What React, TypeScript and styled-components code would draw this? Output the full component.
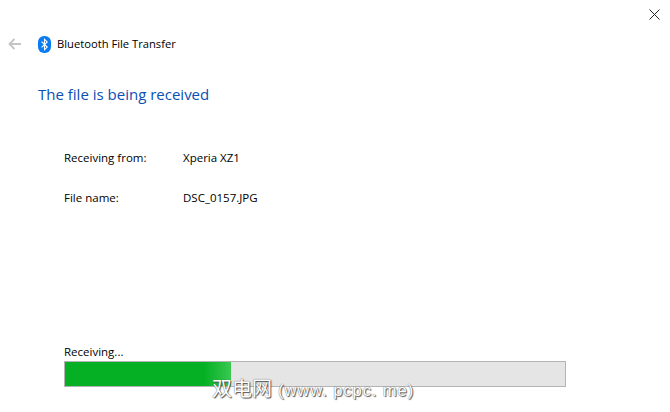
import React from "react";
import styled, { createGlobalStyle } from "styled-components";

const GlobalStyle = createGlobalStyle`
  html, body {
    margin: 0;
    padding: 0;
    background: #fff;
  }
`;

const Window = styled.div`
  position: relative;
  width: 670px;
  height: 412px;
  box-sizing: border-box;
  overflow: hidden;
  background: #fff;
  color: #000;
  font-family: "Open Sans", "Noto Sans", sans-serif;
  font-size: 11.5px;
  display: flex;
  flex-direction: column;
`;

const CloseRow = styled.div`
  height: 28px;
  display: flex;
  justify-content: flex-end;
  align-items: center;
  padding-right: 10px;
`;

const TitleBar = styled.div`
  height: 32px;
  display: flex;
  align-items: center;
  padding-left: 8px;
`;

const BackArrow = styled.svg`
  width: 13px;
  height: 12px;
  margin-right: 17px;
`;

const BluetoothBadge = styled.svg`
  width: 13px;
  height: 17px;
  margin-right: 6px;
`;

const AppName = styled.span`
  font-size: 11.2px;
  margin-bottom: 2px;
`;

const Heading = styled.h1`
  margin: 23px 0 0 38px;
  font-size: 15px;
  line-height: 22px;
  font-weight: 400;
  color: #0a4fb5;
`;

const Details = styled.div`
  margin: 45px 0 0 64px;
  display: flex;
  flex-direction: column;
  row-gap: 24px;
`;

const DetailRow = styled.div`
  display: grid;
  grid-template-columns: 119px 1fr;
  line-height: 16px;
`;

const Footer = styled.div`
  margin: auto 104px 25px 64px;
  display: flex;
  flex-direction: column;
  row-gap: 1px;
`;

const StatusText = styled.div`
  line-height: 16px;
`;

const ProgressTrack = styled.div`
  height: 26px;
  box-sizing: border-box;
  border: 1px solid #b4b4b4;
  background: #e5e5e5;
`;

const ProgressFill = styled.div`
  height: 100%;
  background: linear-gradient(90deg, #06b025 0%, #06b025 84%, #2cc246 96%, #3ac953 100%);
`;

const Watermark = styled.div`
  position: absolute;
  left: 212px;
  top: 375px;
  color: #fff;
  font-family: "Noto Sans CJK SC", "Liberation Sans", sans-serif;
  font-size: 20px;
  line-height: 26px;
  white-space: nowrap;
  text-shadow: 0 0 1px #444, 1px 1px 1px #555;
`;

const WatermarkLatin = styled.span`
  margin-left: 6px;
  font-family: "Liberation Sans", sans-serif;
  font-size: 16.6px;
  letter-spacing: 0.9px;
`;

const App: React.FC = () => {
  const progress = 33.1;

  return (
    <Window>
      <GlobalStyle />
      <CloseRow>
        <svg width="11" height="11" viewBox="0 0 11 11" fill="none" stroke="#222" strokeWidth="1">
          <path d="M.5.5l10 10M10.5.5l-10 10" />
        </svg>
      </CloseRow>
      <TitleBar>
        <BackArrow viewBox="0 0 13 12" fill="none" stroke="#c4c4c4" strokeWidth="1.8">
          <path d="M13 6H1.5M6.5 1 1.5 6l5 5" />
        </BackArrow>
        <BluetoothBadge viewBox="0 0 13 17">
          <rect x="0" y="0" width="13" height="17" rx="6" fill="#0a7cf2" />
          <path d="M3.6 5.6l5.6 5.5-2.7 2.6V3.3l2.7 2.6-5.6 5.5" fill="none" stroke="#fff" strokeWidth="1.1" />
        </BluetoothBadge>
        <AppName>Bluetooth File Transfer</AppName>
      </TitleBar>
      <Heading>The file is being received</Heading>
      <Details>
        <DetailRow>
          <span>Receiving from:</span>
          <span>Xperia XZ1</span>
        </DetailRow>
        <DetailRow>
          <span>File name:</span>
          <span>DSC_0157.JPG</span>
        </DetailRow>
      </Details>
      <Footer>
        <StatusText>Receiving...</StatusText>
        <ProgressTrack>
          <ProgressFill style={{ width: `${progress}%` }} />
        </ProgressTrack>
      </Footer>
      <Watermark>
        双电网<WatermarkLatin>(www. pcpc. me)</WatermarkLatin>
      </Watermark>
    </Window>
  );
};

export default App;
